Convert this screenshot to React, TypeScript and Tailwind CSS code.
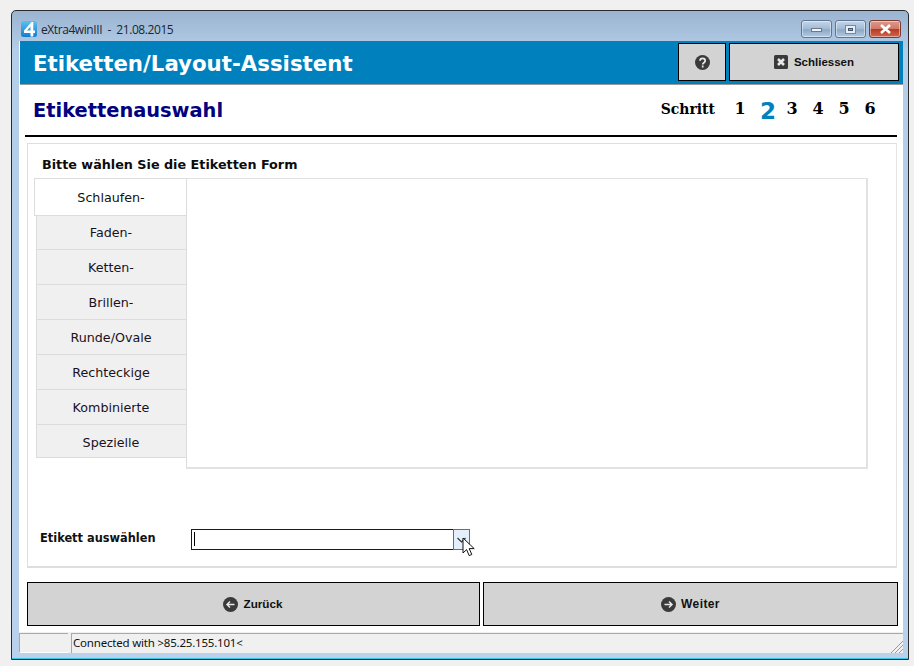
import React from "react";

const V = "font-['DejaVu_Sans',Verdana,sans-serif]";

function Tab({ label, className }: { label: string; className: string }) {
  return (
    <div className={`flex items-center justify-center bg-[#f0f0f0] border-l border-b border-[#dcdcdc] text-[12.7px] text-[#1a1020] pr-[2px] ${className}`}>
      {label}
    </div>
  );
}

function WinBtn({ className, children }: { className: string; children: React.ReactNode }) {
  return (
    <div className={`h-[18px] rounded-[3px] border border-[#5f7690] flex items-center justify-center shadow-[inset_0_0_0_1px_rgba(255,255,255,0.45)] ${className}`}>
      {children}
    </div>
  );
}

function Circle({ dir }: { dir: "l" | "r" | "q" }) {
  return (
    <svg width="15" height="15" viewBox="0 0 15 15">
      <circle cx="7.5" cy="7.5" r="7.5" fill="#3a3a3a" />
      {dir === "l" && <path d="M11.5 7.5H4M7 4.5 4 7.5l3 3" fill="none" stroke="#e8e8e8" strokeWidth="1.5" />}
      {dir === "r" && <path d="M3.5 7.5H11M8 4.5l3 3-3 3" fill="none" stroke="#e8e8e8" strokeWidth="1.5" />}
      {dir === "q" && <path d="M5 5.8c0-3.2 5.2-3.2 5.2 0 0 2-2.5 1.8-2.5 3.7M7.7 10.6v1.8" fill="none" stroke="#e8e8e8" strokeWidth="1.7" />}
    </svg>
  );
}

const tabs: [string, string][] = [
  ["Faden-", "h-[34px]"],
  ["Ketten-", "h-[35px] pt-[2px]"],
  ["Brillen-", "h-[35px] pt-[2px]"],
  ["Runde/Ovale", "h-[35px] pt-[2px]"],
  ["Rechteckige", "h-[35px] pt-[2px]"],
  ["Kombinierte", "h-[35px] pt-[2px]"],
  ["Spezielle", "h-[33px] pt-[4px]"],
];

export default function App() {
  return (
    <div className="w-[914px] h-[666px] bg-[#f0f0f0] pt-[10px] pl-[11px] overflow-hidden">
      <div className="w-[898px] h-[650px] rounded-t-[5px] border border-[#2b2b2b] bg-[linear-gradient(#9ab4d1_0px,#b4cee9_40px,#b9d1ea_100%)] pl-[7px] pr-[5px] pb-[6px] flex flex-col shadow-[inset_0_-1px_0_#38c6e6]">
        {/* Title bar */}
        <div className="h-[30px] shrink-0 flex items-start">
          <svg width="17" height="17" viewBox="0 0 17 17" className="mt-[9px] ml-[2px] mr-[3px]">
            <defs>
              <linearGradient id="lg" x1="0" y1="0" x2="0" y2="1">
                <stop offset="0" stopColor="#5cc0f0" />
                <stop offset="1" stopColor="#0f7fce" />
              </linearGradient>
            </defs>
            <rect width="16" height="16" y="1" rx="2.5" fill="url(#lg)" />
            <path d="M10.5 2 3 10.5V13h6.5v3.5h2.8V13H14v-2.5h-1.7V2zM9.5 6.5v4H6z" fill="#fff" />
          </svg>
          <span className="mt-[9px] text-[12px] leading-[20px] text-[#1c2530] font-['Open_Sans',sans-serif] tracking-[-0.42px] whitespace-pre">eXtra4winIII  -  21.08.2015</span>
          <div className="ml-auto mt-[9px] mr-[2px] flex gap-[3px]">
            <WinBtn className="w-[31px] bg-[linear-gradient(#c4d6ea,#9fb9d6_50%,#8ba8c8_55%,#b3cbe4)]">
              <div className="w-[11px] h-[4px] mt-[2px] bg-[#eef3f8] border border-[#6a7a8c]" />
            </WinBtn>
            <WinBtn className="w-[31px] bg-[linear-gradient(#c4d6ea,#9fb9d6_50%,#8ba8c8_55%,#b3cbe4)]">
              <div className="w-[11px] h-[9px] bg-[#e6edf4] border border-[#7a8a9a] flex items-center justify-center">
                <div className="w-[5px] h-[3px] bg-[#8fa6bd] border border-[#44546a]" />
              </div>
            </WinBtn>
            <WinBtn className="w-[32px] border-[#7a3a30] bg-[linear-gradient(#dc9a8c,#cf7a68_48%,#b93a22_52%,#d2664e)]">
              <svg width="13" height="10" viewBox="0 0 13 10">
                <path d="M2 1l9 8M11 1 2 9" stroke="#fff" strokeWidth="2.6" />
              </svg>
            </WinBtn>
          </div>
        </div>

        {/* Client */}
        <div className={`flex-1 bg-white flex flex-col min-h-0 ${V}`}>
          <div className="h-[44px] shrink-0 ml-[1px] bg-[#0081bd] border-b border-[#9a9a9a] flex items-center pl-[13px] pr-[3px]">
            <span className="text-white font-bold text-[21.3px] leading-none mt-[2px]">Etiketten/Layout-Assistent</span>
            <div className="ml-auto flex gap-[3px] mb-[1px]">
              <div className="w-[48px] h-[38px] bg-[#d3d3d3] border-[1px] border-black flex items-center justify-center">
                <Circle dir="q" />
              </div>
              <div className="w-[170px] h-[38px] mr-[1px] bg-[#d3d3d3] border-[1px] border-black flex items-center justify-center gap-[6px]">
                <svg width="14" height="14" viewBox="0 0 14 14">
                  <rect width="14" height="14" rx="1.5" fill="#3a3a3a" />
                  <path d="M4 4l6 6M10 4l-6 6" stroke="#e8e8e8" strokeWidth="2.6" />
                </svg>
                <span className="pt-px text-[11.5px] font-bold text-[#111] font-['Liberation_Sans',sans-serif]">Schliessen</span>
              </div>
            </div>
          </div>

          <div className="h-[52px] shrink-0 mx-[6px] border-b-2 border-black flex items-start justify-between pl-[8px] pr-[14px]">
            <span className="mt-[14px] text-[19.4px] leading-[24px] font-bold text-[#000080]">Etikettenauswahl</span>
            <div className="mt-[13px] flex items-start font-['DejaVu_Serif',serif] font-bold text-[16px] leading-[22px] text-black">
              <span className="mr-[12px] text-[15.5px] font-['DejaVu_Serif_Condensed','DejaVu_Serif',serif]">Schritt</span>
              <span className="w-[26px] text-center">1</span>
              <span className="w-[26px] text-center pl-[4px] text-[#0081bd] text-[23px] leading-[27px] font-['DejaVu_Sans',sans-serif]">2</span>
              <span className="w-[26px] text-center">3</span>
              <span className="w-[26px] text-center">4</span>
              <span className="w-[26px] text-center">5</span>
              <span className="w-[26px] text-center">6</span>
            </div>
          </div>

          <div className="h-[425px] shrink-0 mt-[6px] ml-[8px] mr-[6px] border border-[#dedede] border-r-[#e4e4e4] border-b-2 flex flex-col">
            <div className="pl-[14px] h-[34px] shrink-0 pt-[12px] text-[12.75px] leading-[17px] font-bold text-[#0c0c0c]">Bitte wählen Sie die Etiketten Form</div>
            <div className="h-[291px] shrink-0 ml-[6px] w-[834px] flex">
              <div className="w-[153px] shrink-0 flex flex-col">
                <div className="h-[38px] pt-[2px] flex items-center justify-center bg-white border-l border-t border-[#dcdcdc] text-[12.7px] text-[#111] border-b">Schlaufen-</div>
                <div className="ml-[2px] flex flex-col">
                  {tabs.map(([t, c]) => (
                    <Tab key={t} label={t} className={c} />
                  ))}
                </div>
              </div>
              <div className="flex-1 -ml-[1px] border-t border-r-2 border-b-2 border-l border-[#e2e2e2] border-l-[#dcdcdc] bg-white" />
            </div>
            <div className="mt-[60px] flex items-center pl-[12px] h-[21px]">
              <span className="w-[151px] shrink-0 mb-[1px] text-[11.4px] font-bold text-[#111]">Etikett auswählen</span>
              <div className="relative w-[279px] h-[21px] flex">
                <div className="flex-1 border border-[#1a1a1a] border-r-0 bg-white pl-[2px] pt-[2px]">
                  <div className="w-px h-[14px] bg-black" />
                </div>
                <div className="w-[17px] border border-[#1f7fd0] bg-[#e3f0fb] flex items-center justify-center">
                  <svg width="9" height="6" viewBox="0 0 9 6"><path d="M.5 1 4.5 5l4-4" fill="none" stroke="#333" strokeWidth="1.2" /></svg>
                </div>
                <svg width="13" height="20" viewBox="0 0 13 20" className="absolute left-[271px] top-[8px]">
                  <path d="M1 1v15l3.6-3.4 2.6 6 2.6-1.1-2.6-5.9h5z" fill="#fff" stroke="#111" strokeWidth="1" />
                </svg>
              </div>
            </div>
          </div>

          <div className="mt-[14px] h-[44px] shrink-0 ml-[8px] mr-[5px] flex gap-[3px] text-[12px] font-bold text-[#111] font-['Liberation_Sans',sans-serif]">
            <div className="w-[453px] pr-[2px] bg-[#d3d3d3] border border-black flex items-center justify-center gap-[6px]">
              <Circle dir="l" />
              <span className="text-[11.7px]">Zurück</span>
            </div>
            <div className="flex-1 bg-[#d3d3d3] border border-black flex items-center justify-center gap-[5px]">
              <Circle dir="r" />
              <span className="tracking-[0.4px]">Weiter</span>
            </div>
          </div>

          <div className="mt-[6px] flex-1 min-h-0 relative flex bg-[#f0f0f0] gap-[3px] pt-px font-['Noto_Sans',sans-serif] text-[11.5px] text-[#111]">
            <div className="w-[49px] border-t border-l border-[#a8a8a8] border-b border-b-white" />
            <div className="flex-1 border-t border-l border-[#a8a8a8] pl-[1px] leading-[18px] tracking-[-0.2px]">Connected with &gt;85.25.155.101&lt;</div>
            <svg width="13" height="13" viewBox="0 0 13 13" className="absolute right-0 bottom-0">
              <path d="M1 13 13 1M5 13l8-8M9 13l4-4" stroke="#9a9a9a" strokeWidth="1" />
            </svg>
          </div>
        </div>
      </div>
    </div>
  );
}
